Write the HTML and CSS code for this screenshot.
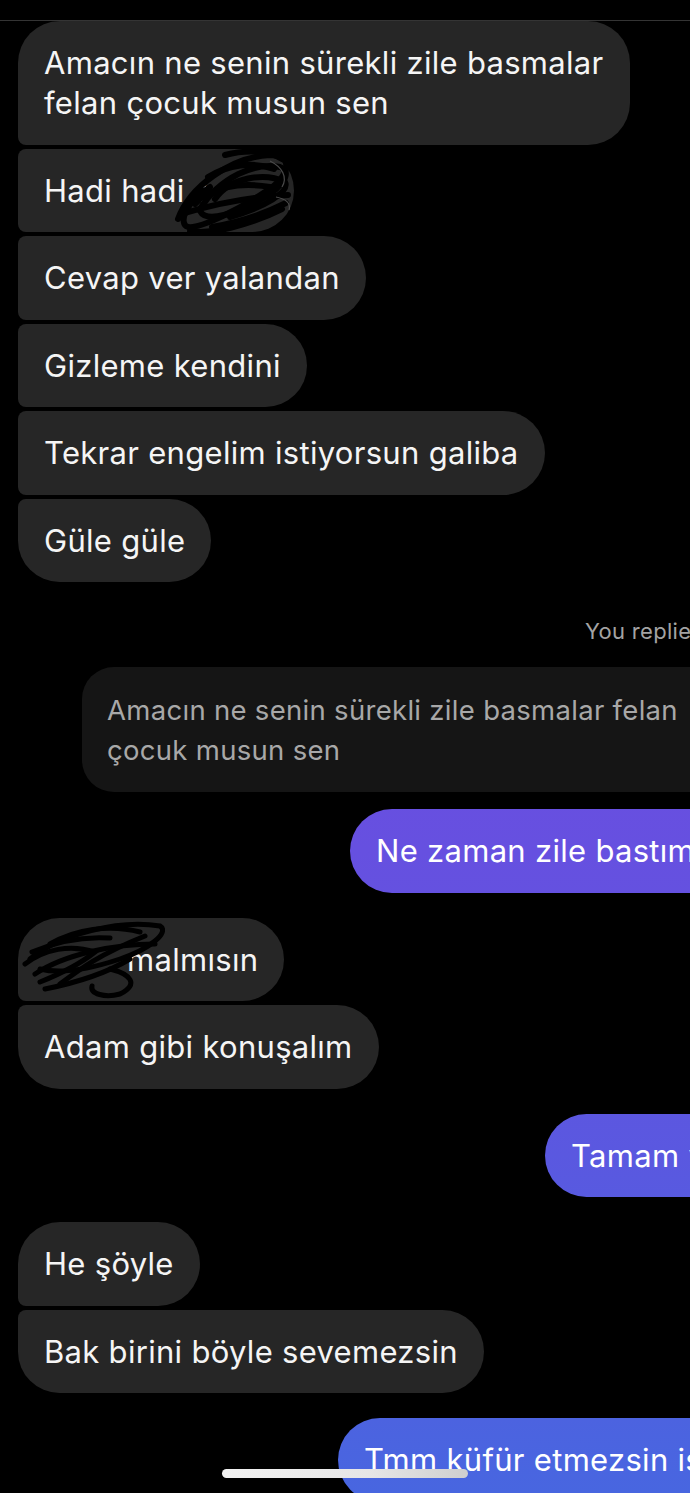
FILE: index.html
```html
<!DOCTYPE html>
<html lang="tr">
<head>
<meta charset="utf-8">
<title>Sohbet</title>
<link rel="stylesheet" href="styles.css">
</head>
<body>
<div class="screen">
  <div class="topbar"></div>
  <main class="chat">
    <section class="group in">
      <div class="bubble first">Amacın ne senin sürekli zile basmalar<br>felan çocuk musun sen</div>
      <div class="bubble mid redact-wrap">Hadi hadi<span class="gap-hadi">ç</span>
        <svg class="scribble scribble-hadi" width="130" height="92" viewBox="0 0 130 92">
          <g fill="none" stroke="#000" stroke-width="6" stroke-linecap="round">
            <path d="M8 72 C20 40 60 10 100 8 C125 8 120 30 95 45 C70 62 30 82 18 80 C8 77 15 55 40 40"/>
            <path d="M30 62 C50 30 85 15 110 20 C125 25 110 45 80 58 C55 70 35 74 30 64"/>
            <path d="M20 84 C40 88 80 78 112 62"/>
            <path d="M45 52 C60 30 95 25 115 35 C120 45 95 60 60 70"/>
            <path d="M25 57 C40 40 70 35 100 40"/>
            <path d="M55 8 C78 2 100 4 112 12"/>
            <path d="M38 30 C58 18 82 14 104 22"/>
            <path d="M15 66 C35 60 75 50 118 48"/>
            <path d="M42 80 C65 76 92 68 116 56"/>
          </g>
          <g fill="none" stroke="#4a4a4a" stroke-width="1.2">
            <path d="M100 14 C112 20 118 30 112 40"/>
            <path d="M106 50 C116 52 121 56 119 63"/>
          </g>
        </svg>
      </div>
      <div class="bubble mid">Cevap ver yalandan</div>
      <div class="bubble mid">Gizleme kendini</div>
      <div class="bubble mid">Tekrar engelim istiyorsun galiba</div>
      <div class="bubble last">Güle güle</div>
    </section>

    <p class="meta">You replied to yourself</p>

    <div class="reply">Amacın ne senin sürekli zile basmalar felan çocuk musun sen</div>

    <div class="bubble sent sent-1">Ne zaman zile bastım ki</div>

    <section class="group in spaced">
      <div class="bubble first redact-wrap"><span class="gap-mal"></span>malmısın
        <svg class="scribble scribble-mal" width="145" height="90" viewBox="0 0 145 90">
          <g fill="none" stroke="#000" stroke-width="5" stroke-linecap="round">
            <path d="M10 45 C40 20 100 5 140 12 C150 18 130 35 100 45 C70 55 40 60 20 55"/>
            <path d="M15 60 C45 40 95 30 135 30"/>
            <path d="M30 30 C55 15 90 10 120 18"/>
            <path d="M25 75 C50 70 85 60 110 45"/>
            <path d="M90 55 C110 60 120 70 100 80 C85 84 70 80 72 72"/>
            <path d="M5 50 C25 35 50 30 75 38 C60 50 40 60 20 68"/>
            <path d="M40 70 C60 55 80 40 125 22"/>
            <path d="M12 38 C35 28 60 22 90 24"/>
          </g>
        </svg>
      </div>
      <div class="bubble last">Adam gibi konuşalım</div>
    </section>

    <div class="bubble sent sent-2">Tamam yeter</div>

    <section class="group in spaced">
      <div class="bubble first">He şöyle</div>
      <div class="bubble last">Bak birini böyle sevemezsin</div>
    </section>

    <div class="bubble sent sent-3">Tmm küfür etmezsin işte</div>
  </main>
  <div class="home-indicator"></div>
</div>
</body>
</html>
```

FILE: styles.css
```css
html, body {
  margin: 0;
  padding: 0;
  background: #000;
}

body {
  font-family: Inter, "Noto Sans", "DejaVu Sans", sans-serif;
  color: #f5f5f5;
}

.screen {
  position: relative;
  width: 690px;
  height: 1493px;
  overflow: hidden;
  background: #000;
}

.topbar {
  height: 20px;
  border-bottom: 1px solid #343434;
}

.chat {
  display: flex;
  flex-direction: column;
  align-items: flex-start;
  padding-left: 18px;
}

.group {
  display: flex;
  flex-direction: column;
  align-items: flex-start;
  gap: 4px;
}

.group.spaced {
  margin-top: 25px;
}

.bubble {
  position: relative;
  box-sizing: border-box;
  background: #262626;
  font-size: 31px;
  letter-spacing: 0.3px;
  line-height: 40px;
  padding: 22px 26px 21.5px;
  border-radius: 42px;
  white-space: nowrap;
}

.in .bubble.first {
  border-bottom-left-radius: 8px;
}

.in .bubble.mid {
  border-top-left-radius: 8px;
  border-bottom-left-radius: 8px;
}

.in .bubble.last {
  border-top-left-radius: 8px;
}

.meta {
  margin: 34px 0 0 567px;
  font-size: 22px;
  letter-spacing: 0.3px;
  line-height: 30px;
  color: #a3a3a3;
  white-space: nowrap;
}

.reply {
  box-sizing: border-box;
  margin: 21px 0 0 64px;
  width: 640px;
  padding: 22.5px 25px;
  background: #151515;
  color: #a8a8a8;
  font-size: 27.5px;
  letter-spacing: 0.3px;
  line-height: 40px;
  border-radius: 32px;
}

.sent {
  color: #fff;
  background: linear-gradient(180deg, #7a45e2 0px, #6650e0 850px, #5a58e0 1155px, #4866e0 1493px);
  background-attachment: fixed;
}

.sent-1 {
  margin-top: 17px;
  margin-left: 332px;
}

.sent-2 {
  margin-top: 25px;
  margin-left: 527px;
}

.sent-3 {
  margin-top: 25px;
  margin-left: 320px;
}

.gap-hadi {
  display: inline-block;
  width: 74px;
  margin-left: 9px;
}

.gap-mal {
  display: inline-block;
  width: 83px;
}

.scribble {
  position: absolute;
  pointer-events: none;
}

.scribble-hadi {
  left: 152px;
  top: -2px;
}

.scribble-mal {
  left: 2px;
  top: -4px;
}

.home-indicator {
  position: absolute;
  left: 222px;
  top: 1469px;
  width: 246px;
  height: 9px;
  border-radius: 5px;
  background: linear-gradient(90deg, #f2f2f2 0%, #e6e6e6 60%, #cfcfcf 100%);
}
```
